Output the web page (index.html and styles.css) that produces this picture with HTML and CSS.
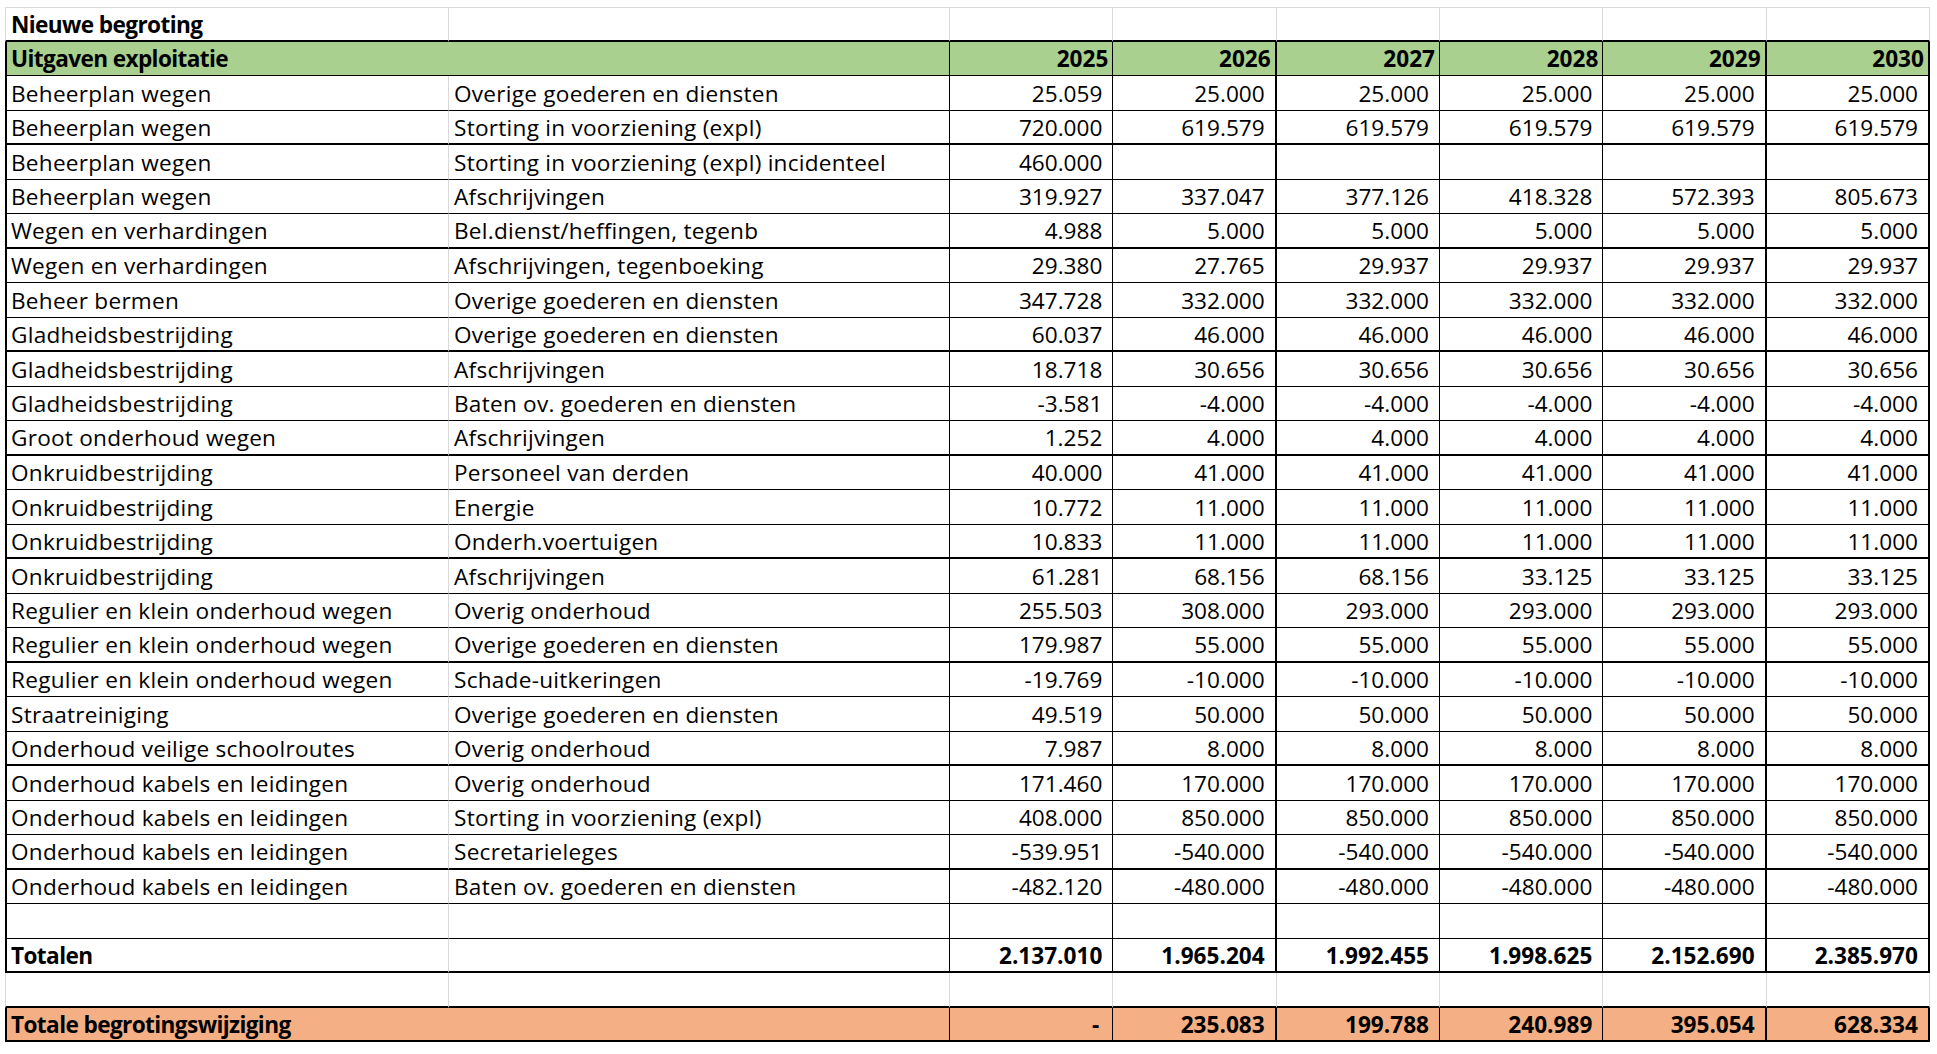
FILE: index.html
```html
<!DOCTYPE html>
<html lang="nl">
<head>
<meta charset="utf-8">
<title>Nieuwe begroting</title>
<link rel="stylesheet" href="styles.css">
</head>
<body>
<div class="sheet">
  <div class="row r-title">
    <div class="c a bold">Nieuwe begroting</div><div class="c"></div><div class="c"></div><div class="c"></div><div class="c"></div><div class="c"></div><div class="c"></div><div class="c"></div>
  </div>
  <div class="row r-head">
    <div class="c a span2">Uitgaven exploitatie</div><div class="c y">2025</div><div class="c y">2026</div><div class="c y">2027</div><div class="c y">2028</div><div class="c y">2029</div><div class="c y">2030</div>
  </div>

  <div class="row"><div class="c a">Beheerplan wegen</div><div class="c">Overige goederen en diensten</div><div class="c n">25.059</div><div class="c n">25.000</div><div class="c n">25.000</div><div class="c n">25.000</div><div class="c n">25.000</div><div class="c n">25.000</div></div>
  <div class="row tk"><div class="c a">Beheerplan wegen</div><div class="c">Storting in voorziening (expl)</div><div class="c n">720.000</div><div class="c n">619.579</div><div class="c n">619.579</div><div class="c n">619.579</div><div class="c n">619.579</div><div class="c n">619.579</div></div>
  <div class="row"><div class="c a">Beheerplan wegen</div><div class="c">Storting in voorziening (expl) incidenteel</div><div class="c n">460.000</div><div class="c n"></div><div class="c n"></div><div class="c n"></div><div class="c n"></div><div class="c n"></div></div>
  <div class="row"><div class="c a">Beheerplan wegen</div><div class="c">Afschrijvingen</div><div class="c n">319.927</div><div class="c n">337.047</div><div class="c n">377.126</div><div class="c n">418.328</div><div class="c n">572.393</div><div class="c n">805.673</div></div>
  <div class="row tk"><div class="c a">Wegen en verhardingen</div><div class="c">Bel.dienst/heffingen, tegenb</div><div class="c n">4.988</div><div class="c n">5.000</div><div class="c n">5.000</div><div class="c n">5.000</div><div class="c n">5.000</div><div class="c n">5.000</div></div>
  <div class="row"><div class="c a">Wegen en verhardingen</div><div class="c">Afschrijvingen, tegenboeking</div><div class="c n">29.380</div><div class="c n">27.765</div><div class="c n">29.937</div><div class="c n">29.937</div><div class="c n">29.937</div><div class="c n">29.937</div></div>
  <div class="row"><div class="c a">Beheer bermen</div><div class="c">Overige goederen en diensten</div><div class="c n">347.728</div><div class="c n">332.000</div><div class="c n">332.000</div><div class="c n">332.000</div><div class="c n">332.000</div><div class="c n">332.000</div></div>
  <div class="row tk"><div class="c a">Gladheidsbestrijding</div><div class="c">Overige goederen en diensten</div><div class="c n">60.037</div><div class="c n">46.000</div><div class="c n">46.000</div><div class="c n">46.000</div><div class="c n">46.000</div><div class="c n">46.000</div></div>
  <div class="row"><div class="c a">Gladheidsbestrijding</div><div class="c">Afschrijvingen</div><div class="c n">18.718</div><div class="c n">30.656</div><div class="c n">30.656</div><div class="c n">30.656</div><div class="c n">30.656</div><div class="c n">30.656</div></div>
  <div class="row"><div class="c a">Gladheidsbestrijding</div><div class="c">Baten ov. goederen en diensten</div><div class="c n">-3.581</div><div class="c n">-4.000</div><div class="c n">-4.000</div><div class="c n">-4.000</div><div class="c n">-4.000</div><div class="c n">-4.000</div></div>
  <div class="row tk"><div class="c a">Groot onderhoud wegen</div><div class="c">Afschrijvingen</div><div class="c n">1.252</div><div class="c n">4.000</div><div class="c n">4.000</div><div class="c n">4.000</div><div class="c n">4.000</div><div class="c n">4.000</div></div>
  <div class="row"><div class="c a">Onkruidbestrijding</div><div class="c">Personeel van derden</div><div class="c n">40.000</div><div class="c n">41.000</div><div class="c n">41.000</div><div class="c n">41.000</div><div class="c n">41.000</div><div class="c n">41.000</div></div>
  <div class="row"><div class="c a">Onkruidbestrijding</div><div class="c">Energie</div><div class="c n">10.772</div><div class="c n">11.000</div><div class="c n">11.000</div><div class="c n">11.000</div><div class="c n">11.000</div><div class="c n">11.000</div></div>
  <div class="row tk"><div class="c a">Onkruidbestrijding</div><div class="c">Onderh.voertuigen</div><div class="c n">10.833</div><div class="c n">11.000</div><div class="c n">11.000</div><div class="c n">11.000</div><div class="c n">11.000</div><div class="c n">11.000</div></div>
  <div class="row"><div class="c a">Onkruidbestrijding</div><div class="c">Afschrijvingen</div><div class="c n">61.281</div><div class="c n">68.156</div><div class="c n">68.156</div><div class="c n">33.125</div><div class="c n">33.125</div><div class="c n">33.125</div></div>
  <div class="row"><div class="c a">Regulier en klein onderhoud wegen</div><div class="c">Overig onderhoud</div><div class="c n">255.503</div><div class="c n">308.000</div><div class="c n">293.000</div><div class="c n">293.000</div><div class="c n">293.000</div><div class="c n">293.000</div></div>
  <div class="row tk"><div class="c a">Regulier en klein onderhoud wegen</div><div class="c">Overige goederen en diensten</div><div class="c n">179.987</div><div class="c n">55.000</div><div class="c n">55.000</div><div class="c n">55.000</div><div class="c n">55.000</div><div class="c n">55.000</div></div>
  <div class="row"><div class="c a">Regulier en klein onderhoud wegen</div><div class="c">Schade-uitkeringen</div><div class="c n">-19.769</div><div class="c n">-10.000</div><div class="c n">-10.000</div><div class="c n">-10.000</div><div class="c n">-10.000</div><div class="c n">-10.000</div></div>
  <div class="row"><div class="c a">Straatreiniging</div><div class="c">Overige goederen en diensten</div><div class="c n">49.519</div><div class="c n">50.000</div><div class="c n">50.000</div><div class="c n">50.000</div><div class="c n">50.000</div><div class="c n">50.000</div></div>
  <div class="row tk"><div class="c a">Onderhoud veilige schoolroutes</div><div class="c">Overig onderhoud</div><div class="c n">7.987</div><div class="c n">8.000</div><div class="c n">8.000</div><div class="c n">8.000</div><div class="c n">8.000</div><div class="c n">8.000</div></div>
  <div class="row"><div class="c a">Onderhoud kabels en leidingen</div><div class="c">Overig onderhoud</div><div class="c n">171.460</div><div class="c n">170.000</div><div class="c n">170.000</div><div class="c n">170.000</div><div class="c n">170.000</div><div class="c n">170.000</div></div>
  <div class="row"><div class="c a">Onderhoud kabels en leidingen</div><div class="c">Storting in voorziening (expl)</div><div class="c n">408.000</div><div class="c n">850.000</div><div class="c n">850.000</div><div class="c n">850.000</div><div class="c n">850.000</div><div class="c n">850.000</div></div>
  <div class="row tk"><div class="c a">Onderhoud kabels en leidingen</div><div class="c">Secretarieleges</div><div class="c n">-539.951</div><div class="c n">-540.000</div><div class="c n">-540.000</div><div class="c n">-540.000</div><div class="c n">-540.000</div><div class="c n">-540.000</div></div>
  <div class="row"><div class="c a">Onderhoud kabels en leidingen</div><div class="c">Baten ov. goederen en diensten</div><div class="c n">-482.120</div><div class="c n">-480.000</div><div class="c n">-480.000</div><div class="c n">-480.000</div><div class="c n">-480.000</div><div class="c n">-480.000</div></div>

  <div class="row"><div class="c a"></div><div class="c"></div><div class="c n"></div><div class="c n"></div><div class="c n"></div><div class="c n"></div><div class="c n"></div><div class="c n"></div></div>
  <div class="row r-total"><div class="c a">Totalen</div><div class="c"></div><div class="c n">2.137.010</div><div class="c n">1.965.204</div><div class="c n">1.992.455</div><div class="c n">1.998.625</div><div class="c n">2.152.690</div><div class="c n">2.385.970</div></div>
  <div class="row r-gap"><div class="c a"></div><div class="c"></div><div class="c"></div><div class="c"></div><div class="c"></div><div class="c"></div><div class="c"></div><div class="c"></div></div>
  <div class="row r-change"><div class="c a span2">Totale begrotingswijziging</div><div class="c n dash">-</div><div class="c n">235.083</div><div class="c n">199.788</div><div class="c n">240.989</div><div class="c n">395.054</div><div class="c n">628.334</div></div>
</div>
</body>
</html>
```

FILE: styles.css
```css
html, body {
  margin: 0;
  padding: 0;
  background: #ffffff;
}

body {
  font-family: "Open Sans", "Liberation Sans", sans-serif;
  font-size: 22.6px;
  color: #000000;
}

.sheet {
  display: grid;
  grid-template-columns: 444px 501px repeat(6, 163.33px);
  grid-auto-rows: 34.5px;
  width: max-content;
  margin: 7px 0 0 5px;
}

.row {
  display: contents;
}

.c {
  box-sizing: border-box;
  display: flex;
  align-items: center;
  padding: 3px 4px 0 5px;
  border-right: 1px solid #000000;
  border-bottom: 1px solid #000000;
  white-space: nowrap;
  overflow: hidden;
  line-height: 1;
  letter-spacing: 0.25px;
}

.row.tk .c {
  border-bottom-width: 2px;
}

/* slightly heavier column rules after 2026 and 2029 */
.row > .c:nth-child(4),
.row > .c:nth-child(7) {
  border-right-width: 2px;
}

.c.a {
  border-left: 2px solid #000000;
  border-right-color: #d9d9d9;
  padding-left: 4px;
}

.row .c:last-child {
  border-right: 2px solid #000000;
}

.n {
  justify-content: flex-end;
  padding-right: 10px;
  letter-spacing: 0;
}

.bold {
  font-weight: 700;
  letter-spacing: -0.6px;
}

/* Title row: plain sheet gridlines */
.r-title .c,
.r-title > .c:nth-child(4),
.r-title > .c:nth-child(7) {
  border-top: 1px solid #dadada;
  border-right: 1px solid #dadada;
  border-bottom: 2px solid #000000;
}

.r-title .c.a {
  border-left: 1px solid #dadada;
  padding-left: 5px;
}

.r-title .c:last-child {
  border-right: 1px solid #dadada;
}

/* Green header */
.r-head .c {
  background: #a9d08e;
  font-weight: 700;
}

.r-head .c.a {
  border-right-color: #000000;
  letter-spacing: -0.6px;
}

.span2 {
  grid-column: span 2;
}

.r-head .y {
  justify-content: flex-end;
  padding-right: 4px;
  letter-spacing: 0;
}

.r-head > .c:nth-child(4),
.r-change > .c:nth-child(4) {
  border-right-width: 1px;
}

.r-head > .c:nth-child(3),
.r-head > .c:nth-child(6),
.r-change > .c:nth-child(3),
.r-change > .c:nth-child(6) {
  border-right-width: 2px;
}

/* Totals */
.r-total .c {
  font-weight: 700;
  border-bottom: 2px solid #000000;
}

.r-total .c.a {
  letter-spacing: -0.6px;
}

/* Empty gap row */
.r-gap .c,
.r-gap > .c:nth-child(4),
.r-gap > .c:nth-child(7) {
  border-right: 1px solid #dadada;
  border-bottom: 2px solid #000000;
}

.r-gap .c.a {
  border-left: 1px solid #dadada;
}

.r-gap .c:last-child {
  border-right: 1px solid #dadada;
}

/* Orange change row */
.r-change .c {
  background: #f4b084;
  font-weight: 700;
  border-bottom: 2px solid #000000;
}

.r-change .c.a {
  border-right-color: #000000;
  letter-spacing: -0.6px;
}

.r-change .dash {
  padding-right: 13px;
}
```
